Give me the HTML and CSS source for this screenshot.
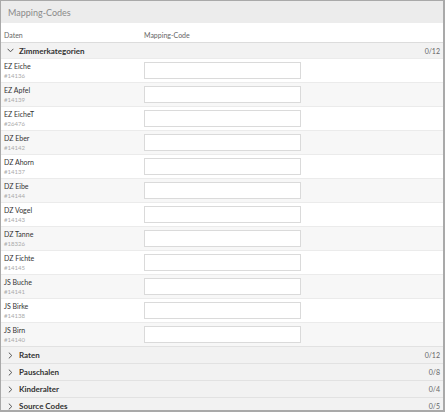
FILE: index.html
```html
<!DOCTYPE html>
<html lang="de">
<head>
<meta charset="utf-8">
<link rel="stylesheet" href="styles.css">
</head>
<body>
<div class="frame">
  <div class="title">Mapping-Codes</div>
  <div class="colhead"><span class="c1">Daten</span><span class="c2">Mapping-Code</span></div>
  <div class="group open">
    <span class="chev"><svg width="7" height="5" viewBox="0 0 7 5"><path d="M0.6 0.8 L3.5 3.8 L6.4 0.8" fill="none" stroke="#555" stroke-width="1"/></svg></span>
    <span class="gname">Zimmerkategorien</span><span class="count">0/12</span>
  </div>
  <div class="rows">
    <div class="row"><div class="lab"><div class="name">EZ Eiche</div><div class="id">#14136</div></div><input class="code" type="text"></div>
    <div class="row"><div class="lab"><div class="name">EZ Apfel</div><div class="id">#14139</div></div><input class="code" type="text"></div>
    <div class="row"><div class="lab"><div class="name">EZ EicheT</div><div class="id">#26476</div></div><input class="code" type="text"></div>
    <div class="row"><div class="lab"><div class="name">DZ Eber</div><div class="id">#14142</div></div><input class="code" type="text"></div>
    <div class="row"><div class="lab"><div class="name">DZ Ahorn</div><div class="id">#14137</div></div><input class="code" type="text"></div>
    <div class="row"><div class="lab"><div class="name">DZ Eibe</div><div class="id">#14144</div></div><input class="code" type="text"></div>
    <div class="row"><div class="lab"><div class="name">DZ Vogel</div><div class="id">#14143</div></div><input class="code" type="text"></div>
    <div class="row"><div class="lab"><div class="name">DZ Tanne</div><div class="id">#18326</div></div><input class="code" type="text"></div>
    <div class="row"><div class="lab"><div class="name">DZ Fichte</div><div class="id">#14145</div></div><input class="code" type="text"></div>
    <div class="row"><div class="lab"><div class="name">JS Buche</div><div class="id">#14141</div></div><input class="code" type="text"></div>
    <div class="row"><div class="lab"><div class="name">JS Birke</div><div class="id">#14138</div></div><input class="code" type="text"></div>
    <div class="row"><div class="lab"><div class="name">JS Birn</div><div class="id">#14140</div></div><input class="code" type="text"></div>
  </div>
  <div class="group closed">
    <span class="chev"><svg width="5" height="7" viewBox="0 0 5 7"><path d="M0.8 0.6 L3.8 3.5 L0.8 6.4" fill="none" stroke="#555" stroke-width="1"/></svg></span>
    <span class="gname">Raten</span><span class="count">0/12</span>
  </div>
  <div class="group closed">
    <span class="chev"><svg width="5" height="7" viewBox="0 0 5 7"><path d="M0.8 0.6 L3.8 3.5 L0.8 6.4" fill="none" stroke="#555" stroke-width="1"/></svg></span>
    <span class="gname">Pauschalen</span><span class="count">0/8</span>
  </div>
  <div class="group closed">
    <span class="chev"><svg width="5" height="7" viewBox="0 0 5 7"><path d="M0.8 0.6 L3.8 3.5 L0.8 6.4" fill="none" stroke="#555" stroke-width="1"/></svg></span>
    <span class="gname">Kinderalter</span><span class="count">0/4</span>
  </div>
  <div class="group closed">
    <span class="chev"><svg width="5" height="7" viewBox="0 0 5 7"><path d="M0.8 0.6 L3.8 3.5 L0.8 6.4" fill="none" stroke="#555" stroke-width="1"/></svg></span>
    <span class="gname">Source Codes</span><span class="count">0/5</span>
  </div>
</div>
</body>
</html>
```
FILE: styles.css
```css
* { box-sizing: border-box; }
html, body { margin: 0; padding: 0; background: #fff; }
body { font-family: Lato, "Noto Sans", sans-serif; color: #333; }
.frame {
  width: 445px;
  height: 412px;
  border: 1px solid #a9a9a9;
  border-right-width: 2px;
  border-bottom-width: 2px;
  display: flex;
  flex-direction: column;
  overflow: hidden;
}
.title {
  height: 22px;
  background: #ececec;
  color: #8a8a8a;
  font-size: 9px;
  padding-left: 7px;
  display: flex;
  align-items: center;
  flex-shrink: 0;
}
.colhead {
  height: 20px;
  display: flex;
  align-items: center;
  padding-top: 5px;
  font-size: 7px;
  color: #666;
  border-bottom: 1px solid #dcdcdc;
  flex-shrink: 0;
}
.c1 { width: 143px; padding-left: 3px; }
.group {
  display: flex;
  align-items: center;
  background: #f2f2f2;
  flex-shrink: 0;
}
.group.open { height: 15px; }
.group.closed { height: 17px; border-top: 1px solid #e2e2e2; }
.chev { width: 18px; display: flex; justify-content: center; align-items: center; }
.gname { font-weight: bold; color: #333; flex: 1; font-size: 8px; }
.count { color: #666; padding-right: 3px; font-size: 7px; }
.rows { display: flex; flex-direction: column; flex-shrink: 0; }
.row {
  height: 24px;
  display: flex;
  align-items: center;
  border-top: 1px solid #ebebeb;
}
.row:nth-child(even) { background: #f7f7f7; }
.lab { width: 143px; padding-left: 3px; line-height: 9px; }
.name { font-size: 7px; color: #333; }
.id { font-size: 6px; color: #aaa; }
.code {
  width: 157px;
  height: 17px;
  border: 1px solid #dadada;
  background: #fff;
  margin: 0;
  padding: 0;
  font: inherit;
}
```
